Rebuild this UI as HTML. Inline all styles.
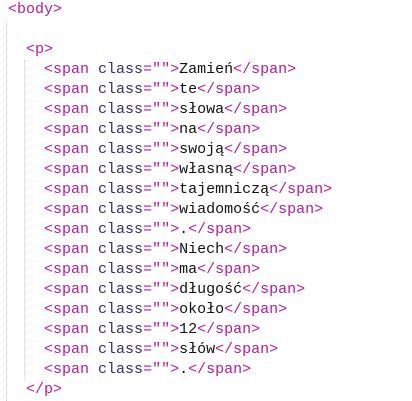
<!DOCTYPE html>
<html><head><style>
body{margin:0;background:#fff;width:412px;height:401px;overflow:hidden;position:relative}
pre{margin:0;font:15px/20px "Liberation Mono",monospace;color:#111;position:absolute;left:8px;top:0}
.t{color:#b5199f}.a{color:#3b2a78}
.g{position:absolute;border-left:1px dotted #ccc;width:0}
</style></head><body>
<div class="g" style="left:6px;top:20px;height:381px"></div>
<div class="g" style="left:24px;top:60px;height:320px"></div>
<pre><span class="t">&lt;body&gt;</span>

  <span class="t">&lt;p&gt;</span>
    <span class="t">&lt;span</span> <span class="a">class</span><span class="t">=""&gt;</span>Zamień<span class="t">&lt;/span&gt;</span>
    <span class="t">&lt;span</span> <span class="a">class</span><span class="t">=""&gt;</span>te<span class="t">&lt;/span&gt;</span>
    <span class="t">&lt;span</span> <span class="a">class</span><span class="t">=""&gt;</span>słowa<span class="t">&lt;/span&gt;</span>
    <span class="t">&lt;span</span> <span class="a">class</span><span class="t">=""&gt;</span>na<span class="t">&lt;/span&gt;</span>
    <span class="t">&lt;span</span> <span class="a">class</span><span class="t">=""&gt;</span>swoją<span class="t">&lt;/span&gt;</span>
    <span class="t">&lt;span</span> <span class="a">class</span><span class="t">=""&gt;</span>własną<span class="t">&lt;/span&gt;</span>
    <span class="t">&lt;span</span> <span class="a">class</span><span class="t">=""&gt;</span>tajemniczą<span class="t">&lt;/span&gt;</span>
    <span class="t">&lt;span</span> <span class="a">class</span><span class="t">=""&gt;</span>wiadomość<span class="t">&lt;/span&gt;</span>
    <span class="t">&lt;span</span> <span class="a">class</span><span class="t">=""&gt;</span>.<span class="t">&lt;/span&gt;</span>
    <span class="t">&lt;span</span> <span class="a">class</span><span class="t">=""&gt;</span>Niech<span class="t">&lt;/span&gt;</span>
    <span class="t">&lt;span</span> <span class="a">class</span><span class="t">=""&gt;</span>ma<span class="t">&lt;/span&gt;</span>
    <span class="t">&lt;span</span> <span class="a">class</span><span class="t">=""&gt;</span>długość<span class="t">&lt;/span&gt;</span>
    <span class="t">&lt;span</span> <span class="a">class</span><span class="t">=""&gt;</span>około<span class="t">&lt;/span&gt;</span>
    <span class="t">&lt;span</span> <span class="a">class</span><span class="t">=""&gt;</span>12<span class="t">&lt;/span&gt;</span>
    <span class="t">&lt;span</span> <span class="a">class</span><span class="t">=""&gt;</span>słów<span class="t">&lt;/span&gt;</span>
    <span class="t">&lt;span</span> <span class="a">class</span><span class="t">=""&gt;</span>.<span class="t">&lt;/span&gt;</span>
  <span class="t">&lt;/p&gt;</span></pre>
</body></html>
